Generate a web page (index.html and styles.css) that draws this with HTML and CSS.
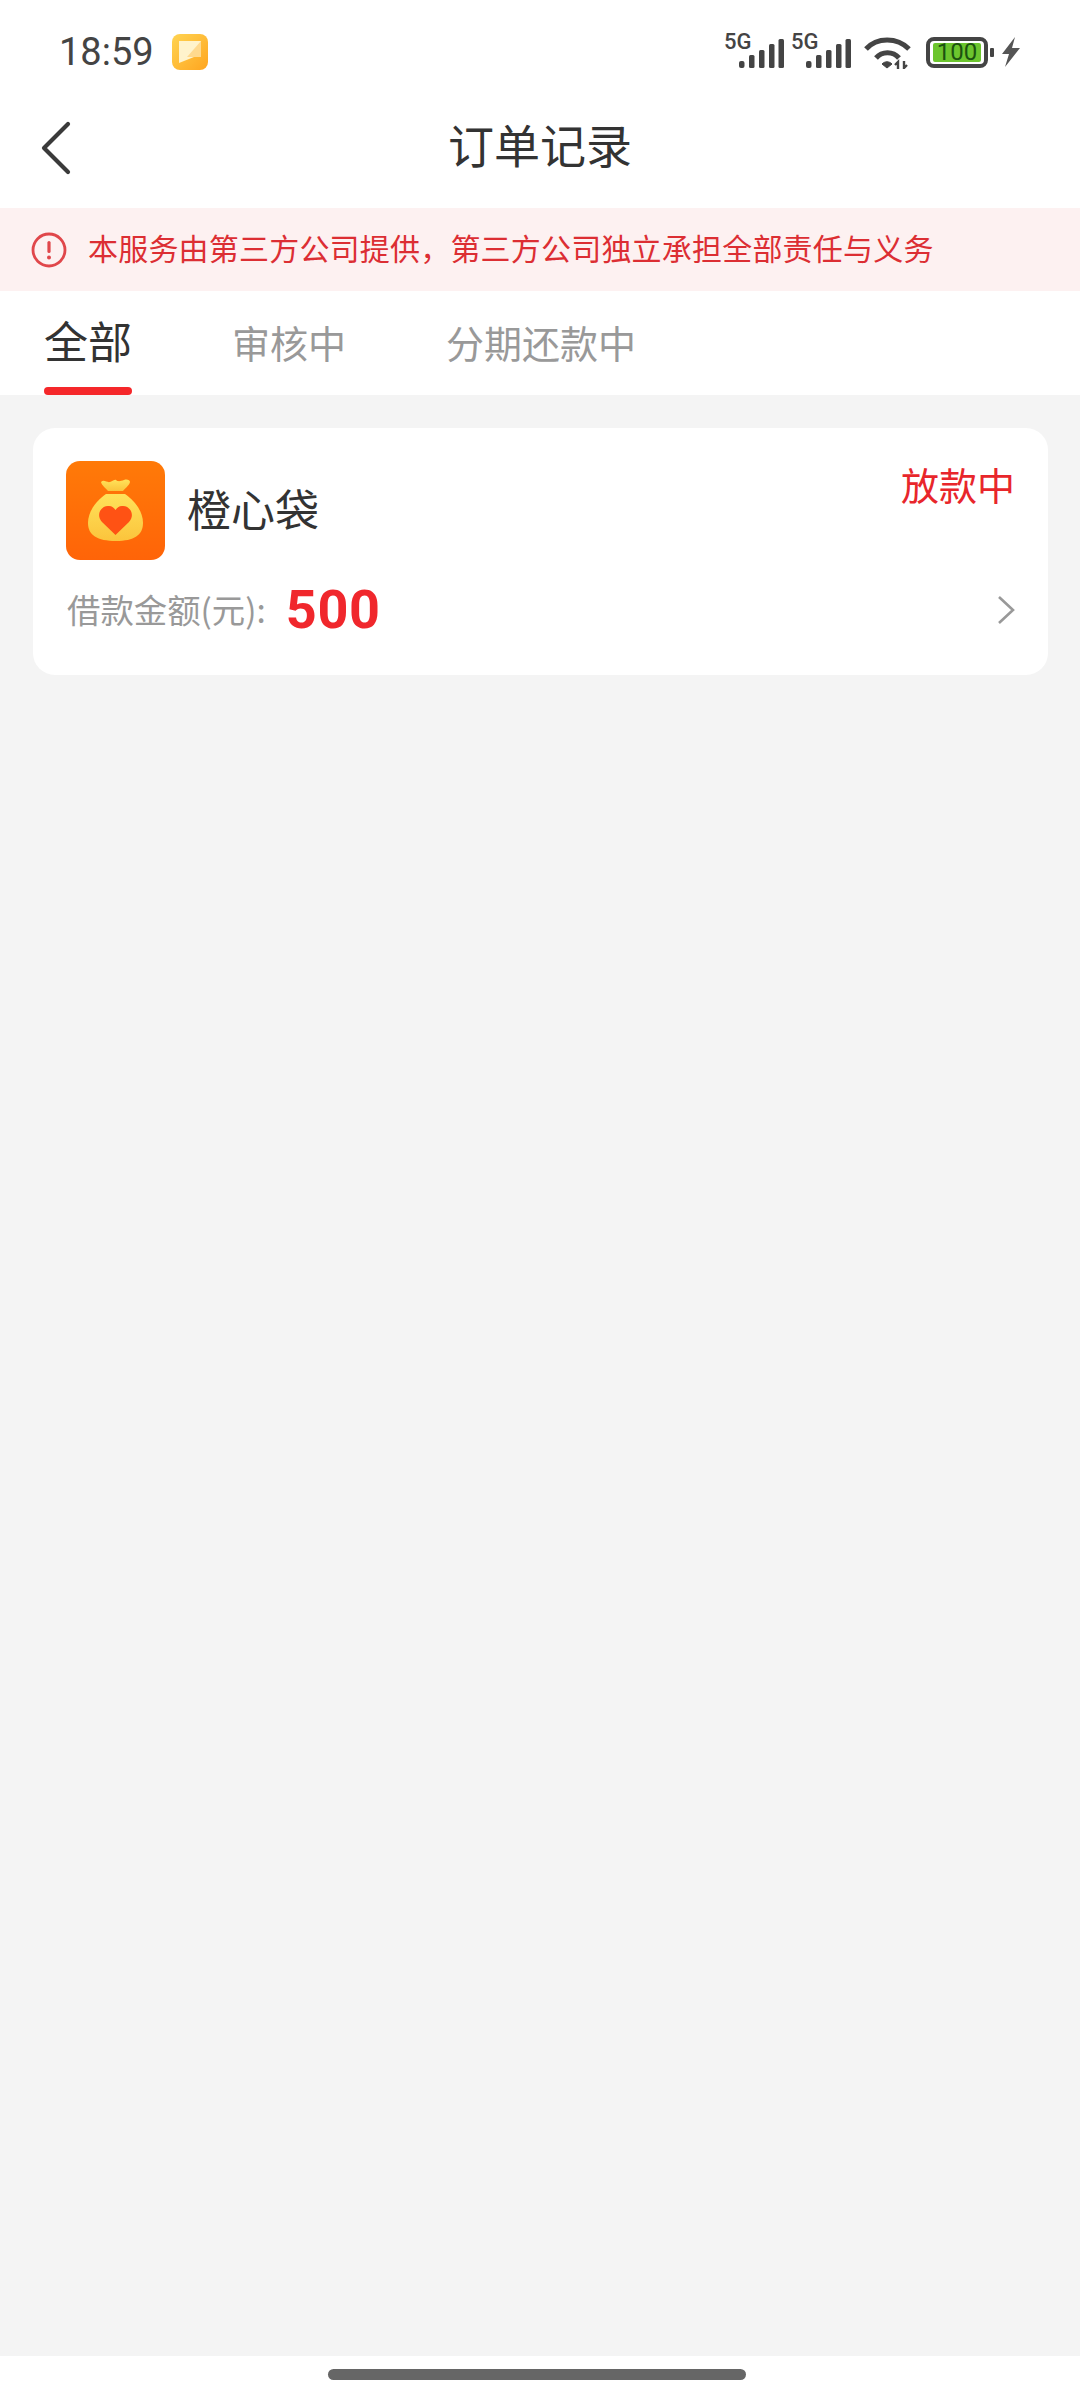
FILE: index.html
```html
<!DOCTYPE html>
<html lang="zh-CN">
<head>
    <meta charset="UTF-8">
    <title>订单记录</title>
    <link rel="stylesheet" href="styles.css">
</head>
<body>
    <div class="page">
        <div class="status-bar">
            <div class="status-left">
                <span class="time">18:59</span>
                <svg class="note-icon" width="36" height="36" viewBox="0 0 36 36">
                    <defs>
                        <linearGradient id="noteBg" x1="0" y1="0" x2="1" y2="1">
                            <stop offset="0" stop-color="#ffd452"/>
                            <stop offset="1" stop-color="#ffa51f"/>
                        </linearGradient>
                    </defs>
                    <rect width="36" height="36" rx="8" fill="url(#noteBg)"/>
                    <path d="M7 7H29V23H22L7 29Z" fill="#fff3cc"/>
                    <path d="M29 7V23H15Z" fill="#ffd27e" opacity=".8"/>
                </svg>
            </div>
            <div class="status-right">
                <div class="signal">
                    <span class="net">5G</span>
                    <svg width="45" height="29" viewBox="0 0 45 29" fill="#444">
                        <rect x="0" y="22" width="5.5" height="7" rx="2"/>
                        <rect x="10" y="16" width="5.5" height="13" rx="1.5"/>
                        <rect x="20" y="11" width="5.5" height="18" rx="1.5"/>
                        <rect x="30" y="5" width="5.5" height="24" rx="1.5"/>
                        <rect x="39.5" y="0" width="5.5" height="29" rx="1.5"/>
                    </svg>
                </div>
                <div class="signal">
                    <span class="net">5G</span>
                    <svg width="45" height="29" viewBox="0 0 45 29" fill="#444">
                        <rect x="0" y="22" width="5.5" height="7" rx="2"/>
                        <rect x="10" y="16" width="5.5" height="13" rx="1.5"/>
                        <rect x="20" y="11" width="5.5" height="18" rx="1.5"/>
                        <rect x="30" y="5" width="5.5" height="24" rx="1.5"/>
                        <rect x="39.5" y="0" width="5.5" height="29" rx="1.5"/>
                    </svg>
                </div>
                <svg class="wifi" width="47" height="34" viewBox="0 0 47 34" fill="none" stroke="#444" stroke-width="5">
                    <path d="M2 14C13 2 33 2 45 14"/>
                    <path d="M12 23C18 16 29 16 35 23"/>
                    <path d="M18 29C21 26 25 26 28 29L23 33Z" fill="#444" stroke-width="1"/>
                    <path d="M34 34V27L31 30M40 26V33L43 30" stroke-width="2.4"/>
                </svg>
                <div class="battery">
                    <div class="battery-body"><span class="battery-fill">100</span></div>
                    <span class="battery-nub"></span>
                </div>
                <svg class="bolt" width="18" height="30" viewBox="0 0 18 30">
                    <path d="M13 0L0 17H7L3 30L18 11H10Z" fill="#555"/>
                </svg>
            </div>
        </div>

        <div class="nav">
            <svg class="back" width="30" height="54" viewBox="0 0 30 54" fill="none" stroke="#3a3a3a" stroke-width="4.2" stroke-linecap="round" stroke-linejoin="round">
                <path d="M27 3L3 27L27 51"/>
            </svg>
            <h1 class="nav-title">订单记录</h1>
        </div>

        <div class="notice">
            <svg width="36" height="36" viewBox="0 0 36 36">
                <circle cx="18" cy="18" r="16" fill="none" stroke="#e0474b" stroke-width="2.8"/>
                <rect x="16.4" y="9" width="3.2" height="12" rx="1.6" fill="#e0474b"/>
                <circle cx="18" cy="25.5" r="2" fill="#e0474b"/>
            </svg>
            <span class="notice-text">本服务由第三方公司提供，第三方公司独立承担全部责任与义务</span>
        </div>

        <div class="tabs">
            <div class="tab tab-on">全部</div>
            <div class="tab">审核中</div>
            <div class="tab">分期还款中</div>
        </div>

        <div class="content">
            <div class="card">
                <div class="card-top">
                    <div class="app">
                        <svg class="app-logo" width="99" height="99" viewBox="0 0 99 99">
                            <defs>
                                <linearGradient id="logoBg" x1="0" y1="0" x2="0" y2="1">
                                    <stop offset="0" stop-color="#ff7a08"/>
                                    <stop offset="1" stop-color="#ff6408"/>
                                </linearGradient>
                                <linearGradient id="bagFill" x1="0" y1="0" x2="0" y2="1">
                                    <stop offset="0" stop-color="#ffe25a"/>
                                    <stop offset="1" stop-color="#fbc43c"/>
                                </linearGradient>
                            </defs>
                            <rect width="99" height="99" rx="14" fill="url(#logoBg)"/>
                            <path d="M35 21C38 18 41 22 44 21C47 20 49 18 50 19C52 21 55 20 58 19C61 18 64 19 64 21C63 25 59 27 57 30H42C40 27 36 25 35 21Z" fill="url(#bagFill)"/>
                            <path d="M40 33H59C68 39 77 50 77 62C77 74 68 80 50 80C31 80 22 74 22 62C22 50 31 39 40 33Z" fill="url(#bagFill)"/>
                            <path d="M49.5 74L36 61C29 53 36 44 43 45C46 45 48 47 49.5 49C51 47 53 45 56 45C63 44 70 53 63 61Z" fill="#ff5214"/>
                        </svg>
                        <span class="app-name">橙心袋</span>
                    </div>
                    <span class="state">放款中</span>
                </div>
                <div class="card-bottom">
                    <div class="loan">
                        <span class="loan-label">借款金额(元):</span>
                        <span class="loan-num">500</span>
                    </div>
                    <svg class="arrow" width="18" height="30" viewBox="0 0 18 30" fill="none" stroke="#999" stroke-width="2.6">
                        <path d="M2 2L16 15L2 28"/>
                    </svg>
                </div>
            </div>
        </div>

        <div class="home-bar"><span class="home-pill"></span></div>
    </div>
</body>
</html>
```

FILE: styles.css
```css
* { box-sizing: border-box; }
body { margin: 0; background: #f4f4f4; font-family: "Noto Sans CJK SC", "Noto Sans", sans-serif; color: #333; }
.page { width: 1080px; height: 2400px; display: flex; flex-direction: column; }

.status-bar { height: 92px; padding: 12px 60px 0 59px; display: flex; justify-content: space-between; align-items: center; background: #fff; }
.status-left { display: flex; align-items: center; gap: 18px; }
.time { font-family: Roboto, sans-serif; font-size: 38px; color: #444; }
.status-right { display: flex; align-items: center; }
.signal { position: relative; width: 60px; height: 32px; margin-left: 7px; display: flex; justify-content: flex-end; align-items: flex-end; }
.net { position: absolute; left: 0; top: -5px; font-family: Roboto, sans-serif; font-size: 22px; font-weight: 500; color: #444; line-height: 22px; }
.wifi { margin-left: 13px; }
.battery { display: flex; align-items: center; margin-left: 15px; }
.battery-body { width: 62px; height: 31px; padding: 2px 3px; border: 4px solid #444; border-radius: 8px; }
.battery-fill { display: block; height: 19px; background: #6cc52e; border-radius: 2px; font-family: Roboto, sans-serif; font-size: 24px; line-height: 19px; color: #1c5210; text-align: center; }
.battery-nub { width: 4px; height: 9px; margin-left: 2px; background: #444; border-radius: 1px; }
.bolt { margin-left: 8px; }

.nav { position: relative; height: 116px; padding: 0 0 5px 41px; display: flex; align-items: center; background: #fff; }
.nav-title { position: absolute; left: 0; right: 0; top: 18px; margin: 0; text-align: center; font-size: 46px; font-weight: 400; line-height: 66px; color: #333; }

.notice { height: 83px; padding: 0 0 0 31px; display: flex; align-items: center; gap: 21px; background: #fdf1f1; color: #dc2e33; font-size: 30px; }
.notice-text { padding-bottom: 6px; letter-spacing: .2px; }

.tabs { position: relative; height: 104px; padding-left: 44px; display: flex; gap: 100px; background: #fff; }
.tab { padding-top: 23px; font-size: 38px; line-height: 56px; color: #999; }
.tab-on { position: relative; padding-top: 20px; font-size: 44px; line-height: 58px; color: #333; }
.tab-on::after { content: ""; position: absolute; left: 0; right: 0; bottom: 0; height: 8px; background: #f5272a; border-radius: 4px; }

.content { flex: 1; padding: 33px 32px 0 33px; }
.card { height: 247px; padding: 33px 33px 0 33px; background: #fff; border-radius: 22px; }
.card-top { display: flex; justify-content: space-between; align-items: flex-start; }
.app { display: flex; align-items: center; gap: 22px; }
.app-logo { display: block; }
.app-name { padding-bottom: 5px; font-size: 44px; color: #333; }
.state { margin-top: -3px; font-size: 38px; line-height: 52px; color: #e8262b; }
.card-bottom { margin-top: 18px; display: flex; justify-content: space-between; align-items: center; }
.loan { padding-left: 1px; display: flex; align-items: center; gap: 20px; }
.loan-label { padding-bottom: 4px; font-size: 33.4px; color: #999; }
.loan-num { font-family: Roboto, "Liberation Sans", sans-serif; font-size: 54px; font-weight: 700; letter-spacing: .6px; line-height: 64px; color: #f0272c; }

.home-bar { height: 44px; padding-top: 13px; display: flex; justify-content: center; background: #fff; }
.home-pill { width: 418px; height: 11px; margin-left: -6px; background: #666; border-radius: 6px; }
```
